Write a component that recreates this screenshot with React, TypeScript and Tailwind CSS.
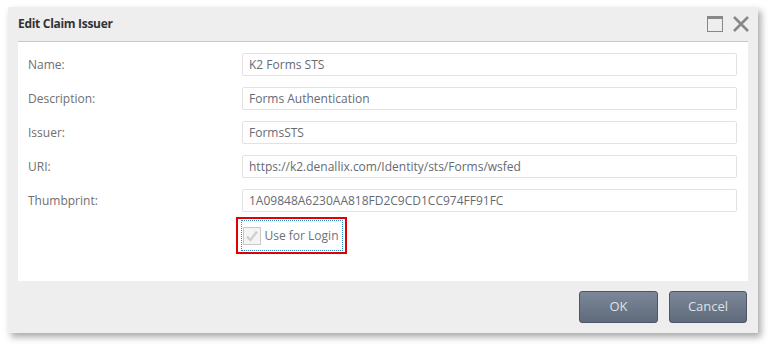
import React from 'react';

const fields: { label: string; value: string }[] = [
  { label: 'Name:', value: 'K2 Forms STS' },
  { label: 'Description:', value: 'Forms Authentication' },
  { label: 'Issuer:', value: 'FormsSTS' },
  { label: 'URI:', value: 'https://k2.denallix.com/Identity/sts/Forms/wsfed' },
  { label: 'Thumbprint:', value: '1A09848A6230AA818FD2C9CD1CC974FF91FC' },
];

const FormRow: React.FC<{ label: string; value: string }> = ({ label, value }) => (
  <div className="flex items-center h-[23px]">
    <div className="w-[214px] shrink-0 text-[12px] text-[#6f6f6f]">{label}</div>
    <div className="flex-1 h-[23px] flex items-center px-[6px] border border-[#e2e2e2] rounded-[2px] text-[12px] text-[#666b73] bg-white">
      {value}
    </div>
  </div>
);

export default function App() {
  return (
    <div className="w-[772px] h-[347px] bg-white pt-[7px] pl-[8px] font-['Open_Sans',sans-serif]">
      <div className="w-[750px] h-[326px] bg-[#eeeeee] px-[10px] flex flex-col shadow-[3px_4px_7px_rgba(0,0,0,0.35)]">
        {/* header */}
        <div className="h-[35px] shrink-0 flex items-center justify-between border-b border-[#c5c8cd]">
          <h1 className="text-[12px] font-bold text-[#333] tracking-[-0.3px]">Edit Claim Issuer</h1>
          <div className="flex items-center gap-[10px] -mr-[1px]">
            <svg width="16" height="16" viewBox="0 0 16 16">
              <rect x="0.5" y="0.5" width="15" height="15" fill="none" stroke="#888" strokeWidth="1" />
              <rect x="0" y="0" width="16" height="3" fill="#888" />
            </svg>
            <svg width="16" height="16" viewBox="0 0 16 16">
              <path d="M1 1 L15 15 M15 1 L1 15" stroke="#888" strokeWidth="2.6" />
            </svg>
          </div>
        </div>

        {/* body */}
        <div className="h-[239px] shrink-0 bg-white pt-[11px] pl-[10px] pr-[11px] flex flex-col gap-[11px]">
          {fields.map((f) => (
            <FormRow key={f.label} label={f.label} value={f.value} />
          ))}
          <div className="flex -mt-[6px]">
            <div className="w-[208px] shrink-0" />
            <div className="w-[111px] h-[37px] border-2 border-[#e00000] flex items-center justify-center">
              <div className="flex items-center gap-[4px] px-[1px] h-[31px] border border-dotted border-[#2a8fd0]">
                <div className="w-[18px] h-[18px] border border-[#c8c8c8] bg-[#f4f4f4] flex items-center justify-center">
                  <svg width="14" height="14" viewBox="0 0 14 14">
                    <path d="M2 7.5 L5.5 11 L12 2.5" fill="none" stroke="#cfcfcf" strokeWidth="2.4" />
                  </svg>
                </div>
                <span className="text-[12px] text-[#6c727b] pr-[2px]">Use for Login</span>
              </div>
            </div>
          </div>
        </div>

        {/* footer */}
        <div className="flex-1 flex items-start justify-end gap-[11px] pt-[10px] mr-[1px]">
          <button className="w-[79px] h-[32px] rounded-[3px] border border-[#4c5666] bg-gradient-to-b from-[#7c8799] to-[#5f6a7b] text-[13px] text-[#dde1e6]">
            OK
          </button>
          <button className="w-[78px] h-[32px] rounded-[3px] border border-[#4c5666] bg-gradient-to-b from-[#7c8799] to-[#5f6a7b] text-[13px] text-[#dde1e6]">
            Cancel
          </button>
        </div>
      </div>
    </div>
  );
}
